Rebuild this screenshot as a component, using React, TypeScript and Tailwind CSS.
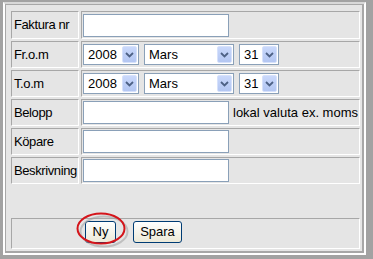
import React from "react";

const cell =
  "border border-t-[#a7a7a7] border-l-[#a7a7a7] border-r-white border-b-white bg-[#e5e5e5]";

function Arrow() {
  return (
    <span className="flex h-[17px] w-[15px] items-center justify-center rounded-[2px] border border-[#d6e1fb] bg-gradient-to-b from-[#c9d8fb] to-[#b3c6f2]">
      <svg width="9" height="6" viewBox="0 0 9 6">
        <path d="M1 1 L4.5 4.5 L8 1" fill="none" stroke="#4d6185" strokeWidth="1.8" />
      </svg>
    </span>
  );
}

function Select({ value, w }: { value: string; w: string }) {
  return (
    <div className={`flex h-[21px] ${w} items-center justify-between border border-[#8aa0b8] bg-white pl-[4px] pr-[1px]`}>
      <span>{value}</span>
      <Arrow />
    </div>
  );
}

function Input() {
  return <div className="h-[23px] w-[146px] border border-[#8aa0b8] bg-white" />;
}

function Row({ label, h, children }: { label: string; h: string; children: React.ReactNode }) {
  return (
    <div className={`flex gap-[2px] ${h}`}>
      <div className={`${cell} flex w-[68px] items-center pl-[2px] tracking-[-0.4px]`}>{label}</div>
      <div className={`${cell} flex flex-1 items-center gap-[5px] pl-[1px]`}>{children}</div>
    </div>
  );
}

function DateRow({ label }: { label: string }) {
  return (
    <Row label={label} h="h-[27px]">
      <Select value="2008" w="w-[56px]" />
      <Select value="Mars" w="w-[90px]" />
      <Select value="31" w="w-[40px]" />
    </Row>
  );
}

export default function App() {
  return (
    <div
      className="relative h-[259px] w-[373px] bg-[#a2a2a2] pb-[4px] pl-[3px] pr-[7px] pt-[2px] text-[13px] text-black"
      style={{ fontFamily: '"Liberation Sans", Arial, sans-serif' }}
    >
      <div className="h-full border-2 border-white border-t-[#d8d8d8]">
        <div className="flex h-full flex-col gap-[2px] border-b-2 border-l border-r-2 border-t border-[#a7a7a7] bg-[#e5e5e5] pb-[2px] pl-[5px] pr-[2px] pt-[6px]">
          <Row label="Faktura nr" h="h-[28px]">
            <Input />
          </Row>
          <DateRow label="Fr.o.m" />
          <DateRow label="T.o.m" />
          <Row label="Belopp" h="h-[27px]">
            <Input />
            <span className="-ml-[1px]">lokal valuta ex. moms</span>
          </Row>
          <Row label="Köpare" h="h-[27px]">
            <Input />
          </Row>
          <Row label="Beskrivning" h="h-[27px]">
            <Input />
          </Row>
          <div className="h-[30px]" />
          <div className={`${cell} flex h-[31px] items-start gap-[17px] pl-[73px] pt-[2px]`}>
            <button className="h-[22px] w-[31px] rounded-[3px] border border-[#003c74] bg-gradient-to-b from-white to-[#ece9d8]">
              Ny
            </button>
            <button className="h-[22px] w-[49px] rounded-[3px] border border-[#003c74] bg-gradient-to-b from-white to-[#ece9d8]">
              Spara
            </button>
          </div>
        </div>
      </div>
      <svg className="pointer-events-none absolute left-[74px] top-[210px]" width="56" height="40" viewBox="0 0 56 40">
        <ellipse cx="28.5" cy="20" rx="23.5" ry="15" fill="none" stroke="#9a9a9a" strokeWidth="2" opacity="0.5" transform="translate(1.5 1.5)" />
        <ellipse cx="27" cy="18.5" rx="23.5" ry="15" fill="none" stroke="#d4151b" strokeWidth="2" />
      </svg>
    </div>
  );
}
